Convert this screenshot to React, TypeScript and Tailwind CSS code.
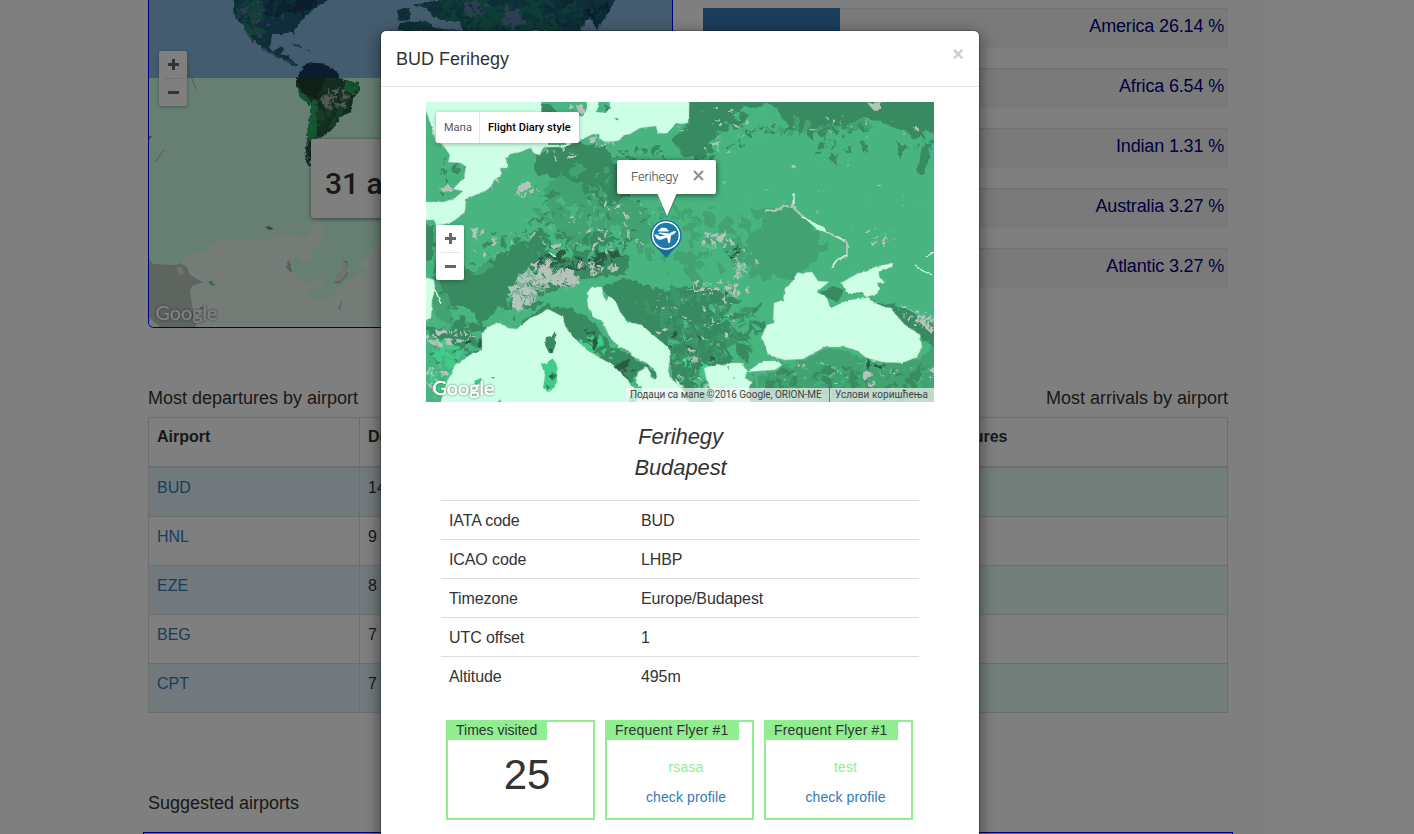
import React from "react";

type Patch = { x: number; y: number; rx: number; ry: number; n: number; size: number; fill: string };

function makeRandom(seed: number) {
  let s = seed;
  return () => {
    s = (s * 1664525 + 1013904223) % 4294967296;
    return s / 4294967296;
  };
}

function scatter(patch: Patch, seed: number): string {
  const rnd = makeRandom(seed);
  let d = "";
  for (let i = 0; i < patch.n; i++) {
    const a = rnd() * Math.PI * 2;
    const r = Math.sqrt(rnd());
    const cx = patch.x + Math.cos(a) * r * patch.rx;
    const cy = patch.y + Math.sin(a) * r * patch.ry;
    const scale = patch.size * (0.35 + rnd() * rnd() * 1.5);
    const tilt = rnd() * Math.PI;
    const k = 6;
    for (let j = 0; j < k; j++) {
      const t = (j / k) * Math.PI * 2 + rnd();
      const q = scale * (0.3 + rnd() * 1.1);
      const u = Math.cos(t) * q * 1.35;
      const v = Math.sin(t) * q * 0.65;
      const px = cx + u * Math.cos(tilt) - v * Math.sin(tilt);
      const py = cy + u * Math.sin(tilt) + v * Math.cos(tilt);
      d += (j ? "L" : "M") + px.toFixed(1) + "," + py.toFixed(1);
    }
    d += "Z";
  }
  return d;
}

function Scatter({ patches, seed }: { patches: Patch[]; seed: number }) {
  return (
    <g>
      {patches.map((p, i) => (
        <path key={i} d={scatter(p, seed + i * 977)} fill={p.fill} />
      ))}
    </g>
  );
}

const LIGHT = "#48b580";
const MID = "#42a272";
const DARK = "#378a60";
const DEEP = "#2c5c45";
const GRAY = "#b4c4bb";
const BRIGHT = "#40cb88";
const SEA = "#ccffe6";

const europePatches: Patch[] = [
  { x: 600, y: 205, rx: 70, ry: 40, n: 70, size: 6, fill: MID },
  { x: 770, y: 245, rx: 50, ry: 36, n: 60, size: 9, fill: MID },
  { x: 570, y: 230, rx: 60, ry: 30, n: 30, size: 6, fill: LIGHT },
  { x: 550, y: 245, rx: 80, ry: 16, n: 70, size: 5, fill: DARK },
  { x: 590, y: 220, rx: 60, ry: 35, n: 45, size: 4, fill: DARK },
  { x: 480, y: 295, rx: 45, ry: 35, n: 30, size: 5, fill: DARK },
  { x: 690, y: 240, rx: 50, ry: 36, n: 50, size: 6, fill: MID },
  { x: 690, y: 320, rx: 70, ry: 40, n: 90, size: 7, fill: DARK },
  { x: 690, y: 325, rx: 70, ry: 36, n: 90, size: 5, fill: "#3d966a" },
  { x: 720, y: 345, rx: 55, ry: 30, n: 50, size: 4, fill: LIGHT },
  { x: 850, y: 380, rx: 100, ry: 24, n: 130, size: 6, fill: MID },
  { x: 850, y: 385, rx: 100, ry: 20, n: 80, size: 5, fill: DARK },
  { x: 850, y: 380, rx: 100, ry: 22, n: 45, size: 3.5, fill: LIGHT },
  { x: 700, y: 140, rx: 24, ry: 20, n: 25, size: 6, fill: DARK },
  { x: 748, y: 125, rx: 30, ry: 18, n: 26, size: 7, fill: LIGHT },
  { x: 735, y: 135, rx: 20, ry: 12, n: 10, size: 4, fill: DARK },
  { x: 840, y: 148, rx: 26, ry: 14, n: 14, size: 4.5, fill: DARK },
  { x: 810, y: 130, rx: 60, ry: 8, n: 24, size: 5, fill: DARK },
  { x: 800, y: 127, rx: 36, ry: 8, n: 12, size: 4, fill: MID },
  { x: 925, y: 143, rx: 12, ry: 8, n: 6, size: 4.5, fill: DARK },
  { x: 640, y: 155, rx: 30, ry: 10, n: 18, size: 4, fill: DARK },
  { x: 445, y: 180, rx: 18, ry: 22, n: 10, size: 2.5, fill: DARK },
  { x: 460, y: 345, rx: 34, ry: 24, n: 50, size: 4, fill: DARK },
  { x: 445, y: 370, rx: 22, ry: 26, n: 40, size: 5, fill: BRIGHT },
  { x: 450, y: 338, rx: 26, ry: 7, n: 30, size: 3, fill: GRAY },
  { x: 436, y: 380, rx: 10, ry: 18, n: 14, size: 3, fill: GRAY },
  { x: 474, y: 343, rx: 12, ry: 8, n: 8, size: 4, fill: DEEP },
  { x: 600, y: 348, rx: 32, ry: 12, n: 26, size: 4, fill: BRIGHT },
  { x: 700, y: 378, rx: 24, ry: 22, n: 44, size: 4, fill: BRIGHT },
  { x: 697, y: 375, rx: 24, ry: 22, n: 26, size: 4, fill: DARK },
  { x: 622, y: 372, rx: 10, ry: 8, n: 9, size: 4, fill: DEEP },
  { x: 587, y: 341, rx: 14, ry: 10, n: 7, size: 4, fill: DEEP },
  { x: 575, y: 262, rx: 38, ry: 8, n: 40, size: 4, fill: DEEP },
  { x: 605, y: 256, rx: 18, ry: 5, n: 14, size: 4, fill: DEEP },
  { x: 525, y: 292, rx: 14, ry: 14, n: 70, size: 4, fill: GRAY },
  { x: 540, y: 274, rx: 14, ry: 10, n: 50, size: 4, fill: GRAY },
  { x: 565, y: 279, rx: 16, ry: 8, n: 60, size: 3.5, fill: GRAY },
  { x: 530, y: 288, rx: 18, ry: 16, n: 30, size: 3, fill: "#7fb298" },
  { x: 595, y: 268, rx: 24, ry: 6, n: 26, size: 2.6, fill: GRAY },
  { x: 530, y: 240, rx: 90, ry: 22, n: 44, size: 2.1, fill: GRAY },
  { x: 610, y: 225, rx: 50, ry: 30, n: 44, size: 2.1, fill: GRAY },
  { x: 525, y: 190, rx: 12, ry: 7, n: 14, size: 3.2, fill: GRAY },
  { x: 560, y: 152, rx: 20, ry: 6, n: 7, size: 2.2, fill: GRAY },
  { x: 600, y: 142, rx: 14, ry: 8, n: 9, size: 2.4, fill: GRAY },
  { x: 490, y: 183, rx: 8, ry: 12, n: 10, size: 2.4, fill: GRAY },
  { x: 717, y: 240, rx: 16, ry: 9, n: 22, size: 2.8, fill: GRAY },
  { x: 740, y: 262, rx: 9, ry: 16, n: 20, size: 3, fill: GRAY },
  { x: 720, y: 288, rx: 30, ry: 7, n: 26, size: 2.4, fill: GRAY },
  { x: 690, y: 320, rx: 50, ry: 34, n: 54, size: 2, fill: GRAY },
  { x: 700, y: 375, rx: 26, ry: 20, n: 26, size: 2.2, fill: GRAY },
  { x: 850, y: 375, rx: 90, ry: 18, n: 44, size: 2.2, fill: GRAY },
  { x: 925, y: 322, rx: 12, ry: 8, n: 30, size: 3, fill: GRAY },
  { x: 908, y: 312, rx: 12, ry: 8, n: 12, size: 2, fill: GRAY },
  { x: 715, y: 130, rx: 40, ry: 24, n: 26, size: 1.9, fill: GRAY },
  { x: 850, y: 128, rx: 80, ry: 12, n: 20, size: 2, fill: GRAY },
  { x: 820, y: 215, rx: 115, ry: 60, n: 30, size: 1.7, fill: GRAY },
  { x: 880, y: 240, rx: 8, ry: 12, n: 12, size: 2.4, fill: GRAY },
  { x: 733, y: 253, rx: 10, ry: 12, n: 8, size: 3, fill: DEEP },
  { x: 720, y: 290, rx: 20, ry: 3, n: 4, size: 2.8, fill: DEEP },
  { x: 695, y: 345, rx: 30, ry: 20, n: 10, size: 2.6, fill: DEEP },
  { x: 875, y: 366, rx: 10, ry: 1, n: 6, size: 3, fill: DEEP },
];

function GoogleMark({ className }: { className: string }) {
  return (
    <svg className={className} width="70" height="28" viewBox="0 0 70 28">
      <text
        x="2.5"
        y="18.5"
        textLength="62"
        lengthAdjust="spacingAndGlyphs"
        fill="#fff"
        stroke="#fff"
        strokeWidth="0.5"
        className="font-['Lato',sans-serif] text-[19.5px] [filter:drop-shadow(0_0_1px_rgba(0,0,0,0.55))]"
      >
        Google
      </text>
    </svg>
  );
}

function ZoomControl({ className }: { className: string }) {
  return (
    <div className={`flex h-[55px] w-7 flex-col items-center rounded-xs bg-white shadow-[0_1px_4px_rgba(0,0,0,0.3)] ${className}`}>
      <svg width="28" height="27" viewBox="0 0 28 27">
        <path d="M9 13.5h11M14.5 8v11" stroke="#666" strokeWidth="3" />
      </svg>
      <div className="h-px w-[19px] bg-[#e6e6e6]" />
      <svg width="28" height="27" viewBox="0 0 28 27">
        <path d="M9 13.5h11" stroke="#666" strokeWidth="3" />
      </svg>
    </div>
  );
}

function WorldMap() {
  const northPatches: Patch[] = [
    { x: 270, y: 12, rx: 34, ry: 24, n: 80, size: 5, fill: "#1b5a75" },
    { x: 250, y: 16, rx: 12, ry: 20, n: 30, size: 5, fill: "#238070" },
    { x: 262, y: 18, rx: 22, ry: 18, n: 50, size: 2, fill: "#5b78a0" },
    { x: 300, y: 4, rx: 18, ry: 8, n: 20, size: 5, fill: "#173757" },
    { x: 275, y: 5, rx: 14, ry: 14, n: 14, size: 5, fill: "#1d4663" },
    { x: 500, y: 12, rx: 90, ry: 20, n: 150, size: 6, fill: "#1d7a6c" },
    { x: 575, y: 12, rx: 30, ry: 16, n: 40, size: 4, fill: "#1e4f6c" },
    { x: 512, y: 18, rx: 10, ry: 8, n: 36, size: 4, fill: "#5c7ba4" },
    { x: 475, y: 8, rx: 12, ry: 8, n: 24, size: 3.4, fill: "#5c7ba4" },
    { x: 598, y: 12, rx: 14, ry: 10, n: 20, size: 4, fill: "#173e62" },
  ];
  const southPatches: Patch[] = [
    { x: 338, y: 98, rx: 18, ry: 12, n: 40, size: 3, fill: "#a4b5aa" },
    { x: 332, y: 118, rx: 14, ry: 10, n: 20, size: 4, fill: "#2f7a50" },
    { x: 345, y: 94, rx: 16, ry: 14, n: 20, size: 2.4, fill: "#2a6e48" },
    { x: 315, y: 122, rx: 5, ry: 24, n: 24, size: 2.6, fill: "#2ab067" },
    { x: 307, y: 140, rx: 3, ry: 24, n: 14, size: 1.8, fill: "#a4b5aa" },
  ];
  return (
    <div className="relative h-[328px] w-[525px] overflow-hidden rounded-b-md border border-t-0 border-[#0000ff] bg-[#ccffe6]">
      <svg className="block" width="523" height="327" viewBox="149 0 523 327">
        <defs>
          <filter id="coast-world" filterUnits="userSpaceOnUse" x="139" y="-12" width="543" height="350">
            <feTurbulence type="fractalNoise" baseFrequency="0.25" numOctaves="2" seed="5" result="n" />
            <feDisplacementMap in="SourceGraphic" in2="n" scale="4" xChannelSelector="R" yChannelSelector="G" />
          </filter>
          <clipPath id="amer-n">
            <path d="M233 -10L235 17L243 25L253 40L262 48L274 56L287 62L295 67L297 65L292 60L288 55L280 55L284 48L280 47L273 52L270 47L272 35L292 32L295 40L293 32L300 23L307 15L317 7L330 0V-10ZM300 70L307 63L323 63L338 72L339 78H298Z" />
            <path d="M397 10L410 8V20L399 21ZM412 5L440 0V-10H614V0L610 10L597 30L590 17L580 31H463L460 22L442 20L433 17L427 8ZM397 31L400 23L427 21L435 28L460 31Z" />
          </clipPath>
          <clipPath id="amer-s">
            <path d="M296 78H339L345 80L359 83L360 89L353 100L351 112L340 117L332 130L322 137L312 140L310 168L305 160L307 137L311 107L300 97L296 86Z" />
          </clipPath>
        </defs>
        <rect x="149" y="0" width="523" height="78" fill="#89b8df" />
        <rect x="149" y="78" width="523" height="249" fill="#ceffe6" />
        <g filter="url(#coast-world)">
          <g clipPath="url(#amer-n)">
            <rect x="149" y="-12" width="523" height="90" fill="#1f5d70" />
            <Scatter patches={northPatches} seed={41} />
            <path d="M298 78L302 66L320 62L340 74V78Z" fill="#153a58" />
          </g>
          <path d="M262 48L274 55L288 61L296 67" fill="none" stroke="#5b78a0" strokeWidth="1.5" />
          <path d="M292 44L302 48L298 46ZM306 50L311 51M245 30L253 42" fill="none" stroke="#3d6288" strokeWidth="1.2" />
        </g>
        <g filter="url(#coast-world)">
          <g clipPath="url(#amer-s)">
            <rect x="290" y="78" width="80" height="95" fill="#255c40" />
            <path d="M296 78H325L318 98L303 94Z" fill="#1d3f2d" />
            <path d="M346 80L360 84L355 94L344 90ZM296 86L310 100L318 108L316 140H304Z" fill="#2aa865" />
            <Scatter patches={southPatches} seed={90} />
          </g>
        </g>
        <path d="M188 68L192 79L196 89M155 162L164 150" fill="none" stroke="#8aa896" strokeWidth="0.8" />
        <path d="M265 227L269 226L274 229L269 230ZM149 136L152 136L149 140Z" fill="#7f9086" />
        <g filter="url(#coast-world)">
          <path d="M140 259L157 265H180L187 255L200 252L217 242L240 240L263 242L283 233L306 237L317 218L323 228L320 245L310 250L313 262L303 262L297 255L292 265L297 278L310 283L325 280L323 287L308 290L310 298L327 300L340 288L357 275L370 272L360 265L380 243L440 215L520 235L690 228V340H140Z" fill="#ebf8ef" />
          <path d="M208 283L213 281L216 285L211 286ZM199 309L204 306L203 311Z" fill="#79d0a5" />
          <path d="M335 281L340 282L338 284ZM286 267L289 258L292 272L288 272ZM338 311L342 298L341 307Z" fill="#b6c2bb" />
        </g>
        <path d="M149 259L153 264L176 265L180 263L187 267L190 275L203 282L192 286L190 292L192 304L196 327H160L149 318Z" fill="#bdc8c1" />
        <path d="M176 268L181 267L184 274L180 275ZM340 282L335 281L338 274L341 270L343 262L347 261L348 278Z" fill="#dce8e0" />
        <path d="M343 261L347 262L347 266M348 272L345 277L340 282L334 283" fill="none" stroke="#a9b5ae" strokeWidth="1" />
      </svg>
      <ZoomControl className="absolute left-2.5 top-[51px]" />
      <div className="absolute left-[162px] top-[139px] flex h-[79px] w-[200px] items-center rounded-xs bg-white px-3.5 pt-2.5 font-['Roboto',sans-serif] text-[30px] font-medium whitespace-nowrap text-[#333] shadow-[0_1px_4px_rgba(0,0,0,0.5)]">
        31 airports
      </div>
      <GoogleMark className="absolute left-1 top-[301px]" />
    </div>
  );
}

function EuropeMap() {
  return (
    <div className="relative mx-[45px] h-[300px] overflow-hidden">
      <svg className="block" width="508" height="300" viewBox="426 102 508 300">
        <defs>
          <filter id="terrain" filterUnits="userSpaceOnUse" x="416" y="92" width="528" height="320">
            <feTurbulence type="fractalNoise" baseFrequency="0.12" numOctaves="2" seed="3" result="n" />
            <feDisplacementMap in="SourceGraphic" in2="n" scale="9" xChannelSelector="R" yChannelSelector="G" />
          </filter>
          <filter id="coast" filterUnits="userSpaceOnUse" x="416" y="92" width="528" height="320">
            <feTurbulence type="fractalNoise" baseFrequency="0.16" numOctaves="2" seed="8" result="n" />
            <feDisplacementMap in="SourceGraphic" in2="n" scale="3" xChannelSelector="R" yChannelSelector="G" />
          </filter>
        </defs>
        <rect x="426" y="102" width="508" height="300" fill={LIGHT} />
        <g filter="url(#terrain)">
          <path d="M535 155L555 145L577 143L605 146L617 165L632 195L612 193L600 200L590 202L575 185L565 178L537 175Z" fill={DARK} />
          <path d="M560 178L578 182L590 205L625 195L650 215L640 240L600 238L572 250L552 222L545 190Z" fill={MID} />
          <path d="M590 198L610 185L630 188L620 200L600 208Z" fill={DARK} />
          <path d="M688 92H944V138L925 130L915 138L905 130L890 125L868 117L848 128L835 127L820 133L800 130L785 121L777 108L766 104L750 113L738 127L715 133L703 156L685 157L672 140L688 125Z" fill={DARK} />
          <path d="M835 128L850 123L866 117L872 127L855 131ZM765 220L800 212L820 235L815 262L790 280L765 272L745 240Z" fill={MID} />
          <path d="M434 260L455 268L478 272L496 254L514 252L522 268L515 290L500 306L485 322L465 326L450 308L440 304L433 300Z" fill={DARK} />
          <path d="M416 218L434 226L432 260L416 262ZM510 245L534 238L560 258L520 275ZM416 327L470 330L484 350L460 345L438 338Z" fill={DARK} />
          <path d="M510 305L520 280L545 265L585 250L630 255L625 275L590 278L560 290L535 308L512 322Z" fill={DARK} />
          <path d="M520 325L545 305L575 310L590 320L612 345L640 360L660 375L655 380L645 367L630 384L600 358L570 334L560 315Z" fill={DARK} />
          <path d="M600 288L625 278L665 292L700 285L740 300L765 318L750 335L730 342L730 365L700 368L690 402L672 380L665 345L625 320Z" fill={DARK} />
          <path d="M705 305L730 302L760 302L775 315L760 340L725 325Z" fill={LIGHT} />
          <path d="M750 380L800 362L830 347L880 364L922 358L944 330V412H745Z" fill={MID} />
          <path d="M870 300L895 305L944 330V350L922 340L900 320Z" fill={DARK} />
          <path d="M428 280L438 282L450 300L452 325L436 320ZM470 275L485 262L495 266L480 275Z" fill={MID} />
          <path d="M448 305L470 308L480 322L460 326ZM500 312L520 306L532 310L520 322ZM530 302L560 288L585 288L592 305L580 312L555 302Z" fill={LIGHT} />
          <Scatter patches={europePatches} seed={7} />
          <path d="M922 146L930 146L925 172L919 176L918 165ZM896 142L908 148L900 160Z" fill={DARK} />
          <path d="M869 103L882 101L882 110L874 111ZM441 187L448 184L454 190L445 193ZM470 230L478 227L477 239Z" fill={GRAY} />
        </g>

        <g filter="url(#coast)">
          <g fill={SEA} stroke={GRAY} strokeWidth="0.5">
            <path d="M415 91H689V122L682 124L676 123L672 128L668 132L658 133L656 126L648 127L640 128L630 134L624 135L617 141L605 142L599 138L600 134L593 134L585 138L580 140L565 147L543 147L540 155L536 154L530 148L520 152L510 154L506 159L508 168L500 168L502 175L494 180L490 188L480 193L466 199L465 212L455 220L450 223L436 226L433 220H415V202L444 202L455 198L463 191L453 189L458 184L464 178L466 167L461 163L448 162L450 155L443 145L436 142L431 125L425 108L415 100Z" />
            <path d="M415 275L434 280L435 290L432 300L431 318L415 326Z" />
            <path d="M436 412L440 403L447 382L455 365L473 353L482 350L482 333L492 325L500 323L508 328L517 329L530 318L538 315L548 309L563 317L565 327L573 337L587 350L600 358L613 365L620 373L628 380L631 386L640 390L636 412Z" />
            <path d="M587 292L592 287H602L603 293L606 301L610 296L616 302L620 312L628 322L642 325L653 335L663 343L669 349L670 360L668 372L673 380L682 388L692 412H632L641 390L636 382L638 372L647 367L653 378H657L656 372L647 363L632 356L628 350L620 347L610 338L603 322L593 317L588 307Z" />
            <path d="M797 273L812 272L818 281L830 282L817 292L827 297L830 307L848 300L868 297L875 303L892 310L905 325L920 335L922 347L917 357L902 363L882 362L865 357L858 351L845 347H825L810 355L803 359L785 360L768 355L764 342L761 338L767 325L773 323L774 303L783 300L785 288L791 284Z" />
            <path d="M841 283L855 275L875 267L893 263L892 267L878 272L880 278L885 282L877 283L879 289L877 294L865 297L862 292L848 294L843 290Z" />
            <path d="M747 372L760 363L767 361L778 361L782 365L775 370L758 371ZM704 368L718 364L725 366L730 363L742 363L747 372L745 378L753 383L748 388L752 412H715L712 392L707 382ZM675 378L684 388L678 386Z" />
          </g>
          <path d="M830 281L842 284L848 294L862 292L866 298L848 300L831 308L827 298L817 292Z" fill={LIGHT} />
          <path d="M833 286L844 290L838 302L828 298L820 292Z" fill={DARK} />
          <path d="M540 110L543 92H586L587 108L583 116L576 118L568 113L562 117L552 118L546 113L541 113ZM593 92H609L610 107L606 113L596 112L599 107ZM614 117L619 119L617 121ZM548 145L550 117L560 118L566 145Z" fill={LIGHT} />
          <path d="M541 104L550 104L557 112L552 117L542 112ZM604 103L610 108L606 112Z" fill={DARK} />
          <path d="M575 106L582 104L586 112L580 115ZM571 103L574 108L569 110Z" fill={GRAY} />
          <path d="M555 331L556 343L553 353L549 353L545 345L546 337L552 336Z" fill={DARK} />
          <path d="M541 364L547 363L552 358L556 363L558 370L556 386L549 392L543 388L545 375Z" fill={BRIGHT} />
          <path d="M552 372L557 375L553 381L549 377ZM546 384L550 387L547 391Z" fill={DARK} />
          <path d="M549 348L553 350L551 354ZM551 374L554 376L551 380Z" fill={DEEP} />
          <path d="M474 381L481 378L482 382L476 385ZM490 377L495 377L494 379ZM497 402L502 402L500 400Z" fill={BRIGHT} />
          <path d="M634 387L642 386L640 394L635 402H628Z" fill={BRIGHT} />
          <path d="M632 392L637 388L636 396Z" fill={GRAY} />
          <path d="M793 200V207L802 216L824 231L839 238L847 243V257L838 259L832 267M765 210L775 211L785 206L795 207" fill="none" stroke={GRAY} strokeWidth="2" />
          <path d="M794 193V205M803 217L816 226M836 236L846 241M847 255L838 258L831 268M926 257L934 252M548 252L556 257M435 290L441 303M914 265L921 270L932 275" fill="none" stroke={SEA} strokeWidth="1.3" />
          <path d="M808 221L824 227L827 232L818 230Z" fill={SEA} />
          <path d="M726 367L728 366L729 369ZM733 377L735 378L734 379Z" fill={DARK} />
        </g>
      </svg>

      <div className="absolute left-2.5 top-2.5 flex h-[31px] w-[143px] items-center rounded-xs bg-white font-['Roboto',sans-serif] text-[11px] shadow-[0_1px_4px_rgba(0,0,0,0.3)]">
        <span className="flex h-full w-11 items-center border-r border-[#e6e6e6] pt-px pl-2 text-[#565656]">Мапа</span>
        <span className="pt-px pl-2 font-medium tracking-[0.05px] whitespace-nowrap text-black">Flight Diary style</span>
      </div>
      <ZoomControl className="absolute left-2.5 top-[123px]" />

      <div className="absolute left-[191px] top-[58px] flex h-[34px] w-[99px] items-center justify-between rounded-xs bg-white pr-3 pl-3.5 font-['Roboto',sans-serif] text-[13px] font-light text-[#333] shadow-[0_1px_6px_rgba(0,0,0,0.6)]">
        <span className="tracking-[-0.15px]">Ferihegy</span>
        <svg className="-mt-[3px]" width="11" height="11" viewBox="0 0 11 11">
          <path d="M1 1l9 9M10 1l-9 9" stroke="#8f8f8f" strokeWidth="2" />
        </svg>
      </div>
      <svg className="absolute left-[220px] top-[91px]" width="40" height="66" viewBox="646 193 40 66">
        <path d="M657 194L666.5 217L677 194" fill="#0004" transform="translate(.5 1)" />
        <path d="M657 193H677L667 216Z" fill="#fff" />
        <path d="M652.5 243L666 258L679.5 243Z" fill="#176d9c" />
        <circle cx="666" cy="235.5" r="15.5" fill="#176d9c" />
        <circle cx="666" cy="235.5" r="13.4" fill="#1d7aa8" stroke="#fff" strokeWidth="1.5" />
        <g transform="translate(653 222)" fill="#fff">
          <path d="M1.5 12.7L4 12.6L6.8 14.5L12.2 13.3L4.8 11.5L7 10.6L16 11.4L20 9.4Q23.3 8.4 23 9.7Q22.6 11 18 13.6L17 20.5L15.4 21.3L14 15.6L8.5 17.4Q5 18.2 3.4 16.2Z" />
          <path d="M5 9.6Q4.6 7.6 7 7.2Q8.2 4.6 11 6Q14 5.4 14.3 7.6Q16.2 8 15.6 9.6Z" />
        </g>
      </svg>

      <GoogleMark className="absolute left-1 top-[274px]" />
      <div className="absolute right-0 bottom-0 flex h-3.5 bg-[#f5f5f5]/70 pr-1.5 pl-1 font-['Roboto',sans-serif] text-[10px] leading-[14px] whitespace-nowrap text-[#444]">
        <span className="w-[199px] tracking-[-0.05px]">Подаци са мапе ©2016 Google, ORION-ME</span>
        <span className="border-l border-[#777] pl-[5px] tracking-[0.06px]">Услови коришћења</span>
      </div>
    </div>
  );
}

const regions = [
  { label: "America 26.14 %", width: 26.14 },
  { label: "Africa 6.54 %", width: 6.54 },
  { label: "Indian 1.31 %", width: 1.31 },
  { label: "Australia 3.27 %", width: 3.27 },
  { label: "Atlantic 3.27 %", width: 3.27 },
];

const departures = [
  ["BUD", "14"],
  ["HNL", "9"],
  ["EZE", "8"],
  ["BEG", "7"],
  ["CPT", "7"],
];

const arrivals = [
  ["", ""],
  ["", ""],
  ["", ""],
  ["", ""],
  ["", ""],
];

function AirportTable({ first, rows, stripe }: { first: string; rows: string[][]; stripe: string }) {
  return (
    <table className="w-[525px] table-fixed border-collapse border border-[#ddd] text-left text-base leading-[22px]">
      <thead>
        <tr className="h-[49px] align-top">
          <th className="w-[211px] border border-b-2 border-[#ddd] p-2 font-bold">{first}</th>
          <th className="border border-b-2 border-[#ddd] p-2 font-bold">Departures</th>
        </tr>
      </thead>
      <tbody>
        {rows.map(([code, count], i) => (
          <tr key={i} className={`h-[49px] align-top first:h-[50px] ${i % 2 === 0 ? stripe : ""}`}>
            <td className="border border-[#ddd] px-2 pt-[9px] pb-[7px] text-[#337ab7]">{code}</td>
            <td className="border border-[#ddd] px-2 pt-[9px] pb-[7px]">{count}</td>
          </tr>
        ))}
      </tbody>
    </table>
  );
}

const facts = [
  ["IATA code", "BUD"],
  ["ICAO code", "LHBP"],
  ["Timezone", "Europe/Budapest"],
  ["UTC offset", "1"],
  ["Altitude", "495m"],
];

function StatCard({ title, labelClass, children }: { title: string; labelClass: string; children: React.ReactNode }) {
  return (
    <div className="h-[100px] w-[149px] border-2 border-[#90ee90] text-sm">
      <div className={`flex h-[18px] items-center bg-[#90ee90] pb-0.5 pl-2 whitespace-nowrap ${labelClass}`}>{title}</div>
      <div className="pl-[13px] text-center">{children}</div>
    </div>
  );
}

function AirportDialog() {
  return (
    <div className="h-[850px] w-[600px] rounded-md border border-black/20 bg-white bg-clip-padding shadow-[0_5px_15px_rgba(0,0,0,0.5)]">
      <header className="flex h-14 items-start justify-between border-b border-[#e5e5e5] px-[15px]">
        <h4 className="pt-[15px] text-lg leading-[26px]">BUD Ferihegy</h4>
        <button className="pt-[13px] text-[20px] leading-[21px] font-bold text-[#ccc]">×</button>
      </header>
      <div className="pt-[15px]">
        <EuropeMap />
        <div className="mt-[19px] text-center text-[22px] leading-[31px] tracking-[-0.1px] italic">
          <p className="pl-px">Ferihegy</p>
          <p className="pl-px">Budapest</p>
        </div>
        <dl className="mx-[60px] mt-[17px]">
          {facts.map(([k, v]) => (
            <div key={k} className="flex h-[39px] items-center border-t border-[#ddd] px-2 pt-0.5 text-base tracking-[-0.1px]">
              <dt className="w-48">{k}</dt>
              <dd>{v}</dd>
            </div>
          ))}
        </dl>
        <div className="mt-[25px] flex gap-2.5 pl-[65px]">
          <StatCard title="Times visited" labelClass="w-[99px]">
            <p className="pt-[5px] text-[42px] leading-[60px]">25</p>
          </StatCard>
          <StatCard title="Frequent Flyer #1" labelClass="w-[132px] tracking-[0.18px]">
            <div className="tracking-[0.12px]">
              <p className="pt-[17px] leading-5 text-[#90ee90]">rsasa</p>
              <p className="pt-2.5 leading-5 text-[#337ab7]">check profile</p>
            </div>
          </StatCard>
          <StatCard title="Frequent Flyer #1" labelClass="w-[132px] tracking-[0.18px]">
            <div className="pl-px tracking-[0.12px]">
              <p className="pt-[17px] leading-5 text-[#90ee90]">test</p>
              <p className="pt-2.5 leading-5 text-[#337ab7]">check profile</p>
            </div>
          </StatCard>
        </div>
      </div>
    </div>
  );
}

export default function App() {
  return (
    <div className="relative h-[834px] w-[1414px] overflow-hidden bg-white font-['Liberation_Sans',Arial,sans-serif] text-[#333]">
      <main className="ml-[148px] w-[1080px]">
        <section className="flex justify-between">
          <WorldMap />
          <div className="flex w-[525px] flex-col gap-5 pt-2">
            {regions.map((r) => (
              <div key={r.label} className="flex h-10 bg-[#f5f5f5] shadow-[inset_0_1px_2px_rgba(0,0,0,0.1)]">
                <div className="bg-[#337ab7]" style={{ width: `${r.width}%` }} />
                <span className="ml-auto pr-1 text-lg leading-9 tracking-[-0.16px] text-[#000080]">{r.label}</span>
              </div>
            ))}
          </div>
        </section>
        <section className="mt-[57px] flex justify-between">
          <div className="w-[525px]">
            <h4 className="h-8 text-lg leading-[26px]">Most departures by airport</h4>
            <AirportTable first="Airport" rows={departures} stripe="bg-[#e2f3f9]" />
          </div>
          <div className="w-[525px]">
            <h4 className="h-8 text-right text-lg leading-[26px]">Most arrivals by airport</h4>
            <AirportTable first="" rows={arrivals} stripe="bg-[#e6fff5]" />
          </div>
        </section>
        <h4 className="mt-[77px] text-lg leading-[26px]">Suggested airports</h4>
        <div className="-mx-[5px] mt-4 h-20 border border-[#0000ff] bg-[#d5d9ec]" />
      </main>
      <div className="absolute inset-0 flex items-start justify-center bg-black/50 pt-[30px] pr-[54px]">
        <AirportDialog />
      </div>
    </div>
  );
}
